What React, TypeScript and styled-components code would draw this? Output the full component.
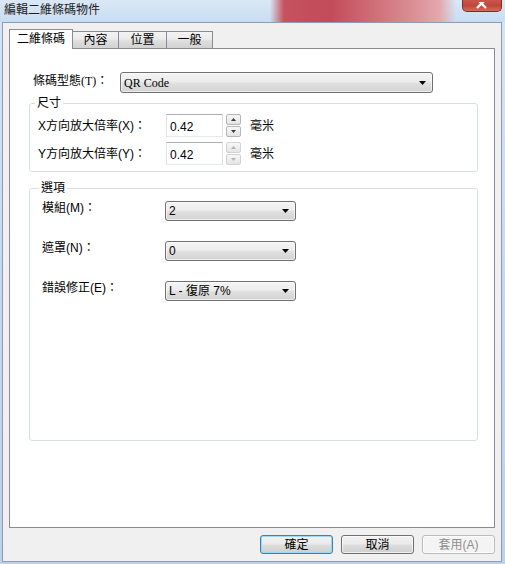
import styled, { createGlobalStyle } from "styled-components";

const GlobalStyle = createGlobalStyle`
  html, body {
    margin: 0;
    padding: 0;
    background: #c3d6ec;
  }
  body {
    width: 505px;
    height: 564px;
    overflow: hidden;
  }
`;

const uiFont = `"Liberation Sans", "Noto Sans CJK TC", sans-serif`;
const serifFont = `"Liberation Serif", "Noto Sans CJK TC", serif`;

const Window = styled.div`
  width: 505px;
  height: 564px;
  display: flex;
  flex-direction: column;
  background: linear-gradient(to bottom, #d6e5f5 0%, #c4d8ef 50%, #bcd1ea 100%);
  font-family: ${uiFont};
  font-size: 12px;
  color: #000;
`;

const TitleBar = styled.div`
  height: 22px;
  flex-shrink: 0;
  display: flex;
  align-items: flex-start;
  padding: 0 3px 0 4px;
  background:
    linear-gradient(
      to right,
      rgba(198, 82, 94, 0) 270px,
      #c6525e 284px,
      #c24c59 330px,
      #d2737c 380px,
      #dc959b 420px,
      #e3a9ae 440px,
      rgba(227, 169, 174, 0) 456px
    ),
    linear-gradient(to bottom, #dae8f6, #c9dcf1);
`;

const Title = styled.span`
  padding-top: 3px;
  line-height: 14px;
  font-size: 12px;
  color: #202020;
`;

const CloseButton = styled.div`
  margin-left: auto;
  width: 40px;
  height: 12px;
  box-sizing: border-box;
  border: 1px solid #7b2b2b;
  border-top: none;
  border-radius: 0 0 5px 5px;
  background: linear-gradient(to bottom, #c9564c 0%, #c14639 50%, #d56c5c 100%);
  display: flex;
  justify-content: center;
  align-items: flex-end;
  overflow: hidden;
`;

const Frame = styled.div`
  flex: 1;
  display: flex;
  flex-direction: column;
  padding: 0 3px 2px 2px;
`;

const Client = styled.div`
  flex: 1;
  display: flex;
  flex-direction: column;
  background: #f0f0f0;
  border: 1px solid #8b9cb3;
  padding: 6px 6px 7px 6px;
`;

const TabRow = styled.div`
  display: flex;
  align-items: flex-end;
  height: 20px;
  position: relative;
  z-index: 1;
`;

const Tab = styled.div<{ $active?: boolean; $w: number }>`
  box-sizing: border-box;
  width: ${(p) => p.$w}px;
  height: ${(p) => (p.$active ? 20 : 18)}px;
  margin-left: ${(p) => (p.$active ? 0 : -1)}px;
  border: 1px solid #898c95;
  border-bottom: ${(p) => (p.$active ? "none" : "1px solid #898c95")};
  background: ${(p) =>
    p.$active
      ? "#ffffff"
      : "linear-gradient(to bottom, #f3f3f3 0%, #ebebeb 45%, #dedede 55%, #d2d2d2 100%)"};
  display: flex;
  justify-content: center;
  padding-top: ${(p) => (p.$active ? 2 : 1)}px;
  line-height: 14px;
  font-size: 12px;
  &:first-child {
    margin-left: 0;
  }
`;

const Panel = styled.div`
  box-sizing: border-box;
  height: 480px;
  margin-top: -1px;
  background: #ffffff;
  border: 1px solid #898c95;
  padding: 23px 16px 0 19px;
  display: flex;
  flex-direction: column;
`;

const TypeRow = styled.div`
  display: flex;
  align-items: center;
  padding-left: 4px;
`;

const TypeLabel = styled.span`
  width: 87px;
  font-family: ${serifFont};
  line-height: 14px;
  padding-bottom: 3px;
`;

const Combo = styled.div<{ $w: number; $h: number; $serif?: boolean }>`
  box-sizing: border-box;
  width: ${(p) => p.$w}px;
  height: ${(p) => p.$h}px;
  display: flex;
  align-items: center;
  padding: 0 6px 0 3px;
  border: 1px solid #707070;
  border-radius: 3px;
  background: linear-gradient(to bottom, #f4f4f4 0%, #ececec 45%, #dfdfdf 55%, #d3d3d3 100%);
  box-shadow: inset 0 0 0 1px rgba(255, 255, 255, 0.6);
  font-family: ${(p) => (p.$serif ? serifFont : uiFont)};
  font-size: 12px;
  line-height: 14px;
`;

const ComboArrow = styled.svg`
  margin-left: auto;
  width: 7px;
  height: 4px;
`;

const Group = styled.fieldset<{ $mt: number; $pt: number; $pl: number; $pb: number }>`
  margin: ${(p) => p.$mt}px 0 0;
  padding: ${(p) => p.$pt}px 8px ${(p) => p.$pb}px ${(p) => p.$pl}px;
  border: 1px solid #d5dfe5;
  border-radius: 3px;
  min-width: 0;
`;

const Caption = styled.legend`
  padding: 0 2px;
  margin-left: -3px;
  font-size: 12px;
  line-height: 12px;
`;

const SizeRows = styled.div`
  display: flex;
  flex-direction: column;
  gap: 5px;
`;

const SizeRow = styled.div`
  display: flex;
  align-items: center;
  height: 23px;
`;

const SizeLabel = styled.span`
  width: 128px;
  line-height: 14px;
`;

const NumberInput = styled.div`
  box-sizing: border-box;
  width: 57px;
  height: 23px;
  border: 1px solid;
  border-color: #abadb3 #dbdfe6 #e3e9ef #e2e3ea;
  background: #fff;
  display: flex;
  align-items: center;
  padding: 2px 0 0 3px;
  line-height: 14px;
`;

const Spinner = styled.div`
  margin-left: 3px;
  width: 15px;
  height: 23px;
  display: flex;
  flex-direction: column;
  gap: 1px;
`;

const SpinButton = styled.div<{ $disabled?: boolean }>`
  flex: 1;
  box-sizing: border-box;
  border: 1px solid ${(p) => (p.$disabled ? "#d2d2d2" : "#b5b5b5")};
  border-radius: 2px;
  background: linear-gradient(to bottom, #f7f7f7, #e4e4e4);
  display: flex;
  justify-content: center;
  align-items: center;
  color: ${(p) => (p.$disabled ? "#b4b4b4" : "#3c3c3c")};
`;

const Unit = styled.span`
  margin-left: 9px;
  line-height: 14px;
`;

const OptionRows = styled.div`
  display: flex;
  flex-direction: column;
  gap: 20px;
`;

const OptionRow = styled.div`
  display: flex;
  align-items: flex-start;
`;

const OptionLabel = styled.span`
  width: 123px;
  line-height: 14px;
`;

const ButtonRow = styled.div`
  display: flex;
  justify-content: flex-end;
  gap: 8px;
  margin-top: 7px;
`;

const DialogButton = styled.div<{ $primary?: boolean; $disabled?: boolean }>`
  box-sizing: border-box;
  width: 73px;
  height: 19px;
  border: 1px solid
    ${(p) => (p.$primary ? "#3c7fb1" : p.$disabled ? "#b8bcbf" : "#707070")};
  border-radius: 3px;
  background: ${(p) =>
    p.$disabled
      ? "#f4f4f4"
      : "linear-gradient(to bottom, #f2f2f2 0%, #ebebeb 45%, #dddddd 55%, #cfcfcf 100%)"};
  box-shadow: ${(p) =>
    p.$primary ? "inset 0 0 0 1px #9ed6f5" : "inset 0 0 0 1px rgba(255,255,255,0.7)"};
  color: ${(p) => (p.$disabled ? "#8d8d8d" : "#000")};
  display: flex;
  justify-content: center;
  align-items: center;
  font-size: 12px;
  line-height: 14px;
`;

const Arrow = () => (
  <ComboArrow viewBox="0 0 7 4">
    <polygon points="0,0 7,0 3.5,4" fill="#000" />
  </ComboArrow>
);

const SpinArrow = ({ up }: { up?: boolean }) => (
  <svg width="5" height="3" viewBox="0 0 5 3">
    <polygon points={up ? "0,3 5,3 2.5,0" : "0,0 5,0 2.5,3"} fill="currentColor" />
  </svg>
);

const sizeRows = [
  { label: "X方向放大倍率(X)：", value: "0.42", disabled: false },
  { label: "Y方向放大倍率(Y)：", value: "0.42", disabled: true },
];

const optionRows = [
  { label: "模組(M)：", value: "2" },
  { label: "遮罩(N)：", value: "0" },
  { label: "錯誤修正(E)：", value: "L - 復原 7%" },
];

const tabs = [
  { label: "二維條碼", w: 64, active: true },
  { label: "內容", w: 47 },
  { label: "位置", w: 49 },
  { label: "一般", w: 47 },
];

export default function App() {
  return (
    <>
      <GlobalStyle />
      <Window>
        <TitleBar>
          <Title>編輯二維條碼物件</Title>
          <CloseButton>
            <svg width="12" height="9" viewBox="0 0 12 9">
              <path d="M1 -3 L10 6 M10 -3 L1 6" stroke="#fff" strokeWidth="2.4" />
            </svg>
          </CloseButton>
        </TitleBar>
        <Frame>
          <Client>
            <TabRow>
              {tabs.map((t) => (
                <Tab key={t.label} $active={t.active} $w={t.w}>
                  {t.label}
                </Tab>
              ))}
            </TabRow>
            <Panel>
              <TypeRow>
                <TypeLabel>條碼型態(T)：</TypeLabel>
                <Combo $w={313} $h={21} $serif>
                  QR Code
                  <Arrow />
                </Combo>
              </TypeRow>

              <Group $mt={4} $pt={5} $pl={8} $pb={6}>
                <Caption>尺寸</Caption>
                <SizeRows>
                  {sizeRows.map((r) => (
                    <SizeRow key={r.label}>
                      <SizeLabel>{r.label}</SizeLabel>
                      <NumberInput>{r.value}</NumberInput>
                      <Spinner>
                        <SpinButton $disabled={r.disabled}>
                          <SpinArrow up />
                        </SpinButton>
                        <SpinButton $disabled={r.disabled}>
                          <SpinArrow />
                        </SpinButton>
                      </Spinner>
                      <Unit>毫米</Unit>
                    </SizeRow>
                  ))}
                </SizeRows>
              </Group>

              <Group $mt={10} $pt={7} $pl={12} $pb={139}>
                <Caption>選項</Caption>
                <OptionRows>
                  {optionRows.map((r) => (
                    <OptionRow key={r.label}>
                      <OptionLabel>{r.label}</OptionLabel>
                      <Combo $w={131} $h={20}>
                        {r.value}
                        <Arrow />
                      </Combo>
                    </OptionRow>
                  ))}
                </OptionRows>
              </Group>
            </Panel>
            <ButtonRow>
              <DialogButton $primary>確定</DialogButton>
              <DialogButton>取消</DialogButton>
              <DialogButton $disabled>套用(A)</DialogButton>
            </ButtonRow>
          </Client>
        </Frame>
      </Window>
    </>
  );
}
